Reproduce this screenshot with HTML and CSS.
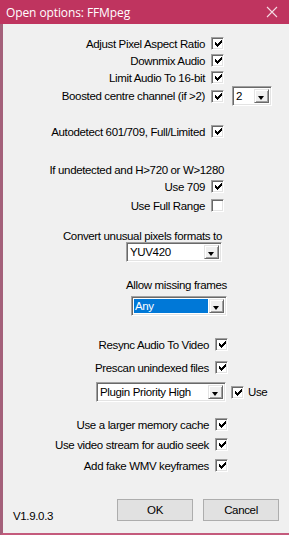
FILE: index.html
```html
<!DOCTYPE html>
<html>
<head>
<meta charset="utf-8">
<link rel="stylesheet" href="styles.css">
</head>
<body>
<div class="window">
  <div class="titlebar">
    <span class="title">Open options: FFMpeg</span>
    <svg class="close" width="12" height="12" viewBox="0 0 12 12"><path d="M1 1 L11 11 M11 1 L1 11" stroke="#f4dbe3" stroke-width="1.1" fill="none"/></svg>
  </div>
  <div class="content">
    <div class="row r1"><div class="main m1"><span>Adjust Pixel Aspect Ratio</span><span class="cb on"></span></div></div>
    <div class="row"><div class="main m1"><span>Downmix Audio</span><span class="cb on"></span></div></div>
    <div class="row"><div class="main m1"><span>Limit Audio To 16-bit</span><span class="cb on"></span></div></div>
    <div class="row tall"><div class="main m1"><span>Boosted centre channel (if &gt;2)</span><span class="cb on"></span></div>
      <div class="combo c-small"><span class="val">2</span><span class="btn"></span></div></div>
    <div class="row r-auto"><div class="main m1"><span>Autodetect 601/709, Full/Limited</span><span class="cb on"></span></div></div>
    <div class="row r-undet"><div class="main m-undet"><span>If undetected and H&gt;720 or W&gt;1280</span></div></div>
    <div class="row"><div class="main m1"><span>Use 709</span><span class="cb on"></span></div></div>
    <div class="row r-full"><div class="main m1"><span>Use Full Range</span><span class="cb"></span></div></div>
    <div class="label r-conv"><div class="main m-conv"><span>Convert unusual pixels formats to</span></div></div>
    <div class="row tall"><div class="main m-conv"><div class="combo c-yuv"><span class="val">YUV420</span><span class="btn"></span></div></div></div>
    <div class="label r-allow"><div class="main m-allow"><span>Allow missing frames</span></div></div>
    <div class="row tall r-any"><div class="main m-allow"><div class="combo c-any"><span class="val sel">Any</span><span class="btn"></span></div></div></div>
    <div class="row r-resync"><div class="main m3"><span>Resync Audio To Video</span><span class="cb on"></span></div></div>
    <div class="row r-pre"><div class="main m3"><span>Prescan unindexed files</span><span class="cb on"></span></div></div>
    <div class="row tall r-plug"><div class="main m-plug"><div class="combo c-plug"><span class="val">Plugin Priority High</span><span class="btn"></span></div></div>
      <span class="cb on use-cb"></span><span class="use">Use</span></div>
    <div class="row r-cache"><div class="main m3"><span>Use a larger memory cache</span><span class="cb on"></span></div></div>
    <div class="row r-vid"><div class="main m3"><span>Use video stream for audio seek</span><span class="cb on"></span></div></div>
    <div class="row r-wmv"><div class="main m3"><span>Add fake WMV keyframes</span><span class="cb on"></span></div></div>
    <div class="footer">
      <span class="ver">V1.9.0.3</span>
      <span class="button ok">OK</span>
      <span class="button cancel">Cancel</span>
    </div>
  </div>
</div>
</body>
</html>
```

FILE: styles.css
```css
html, body {
  margin: 0;
  padding: 0;
  background: #f0f0f0;
}
body {
  width: 289px;
  height: 535px;
  overflow: hidden;
  font-family: "Liberation Sans", Arial, sans-serif;
  font-size: 11.5px;
  letter-spacing: -0.35px;
  color: #000;
}
.window {
  width: 289px;
  height: 535px;
  box-sizing: border-box;
  border-left: 3px solid #a4607a;
  border-bottom: 2px solid #c45a7c;
  background: #f0f0f0;
  display: flex;
  flex-direction: column;
}
.titlebar {
  height: 24px;
  margin-left: -3px;
  background: #bf345f;
  display: flex;
  align-items: center;
  justify-content: space-between;
  padding: 0 11px 0 6px;
  flex: none;
}
.title {
  color: #fff;
  font-family: "Open Sans", "Liberation Sans", sans-serif;
  font-size: 12px;
  letter-spacing: -0.1px;
}
.close {
  display: block;
}
.content {
  display: flex;
  flex-direction: column;
}
.row {
  display: flex;
  align-items: center;
  height: 17px;
}
.row.tall {
  height: 20px;
}
.label {
  display: flex;
  align-items: center;
  height: 12px;
}
.main {
  display: flex;
  align-items: center;
  justify-content: flex-end;
  gap: 6px;
  flex: none;
  white-space: nowrap;
}
.m1 { width: 221px; }
.m3 { width: 225px; }
.m-undet { width: 221px; }
.m-conv { width: 219px; }
.m-allow { width: 224px; }
.m-plug { width: 223px; }

.r1 { margin-top: 11px; }
.r-auto { margin-top: 17px; }
.r-undet { margin-top: 21px; }
.r-full { margin-top: 2px; }
.r-conv { margin-top: 16px; }
.r-allow { margin-top: 17px; margin-bottom: 5px; }
.r-resync { margin-top: 20px; }
.r-pre { margin-top: 6px; }
.r-plug { margin-top: 6px; }
.r-cache { margin-top: 14px; }
.r-vid { margin-top: 3px; }
.r-wmv { margin-top: 4px; }

.cb {
  width: 13px;
  height: 13px;
  box-sizing: border-box;
  background: #fff;
  border-top: 1px solid #a0a0a0;
  border-left: 1px solid #a0a0a0;
  border-right: 1px solid #fff;
  border-bottom: 1px solid #fff;
  box-shadow: inset 1px 1px 0 #696969, inset -1px -1px 0 #e3e3e3;
  flex: none;
  position: relative;
}
.cb.on::after {
  content: "";
  position: absolute;
  left: 3px;
  top: 2px;
  width: 7px;
  height: 7px;
  background: no-repeat center / 7px 7px url("data:image/svg+xml;utf8,<svg xmlns='http://www.w3.org/2000/svg' width='7' height='7' viewBox='0 0 7 7' shape-rendering='crispEdges'><path d='M6 0h1v1h-1zM5 1h2v1h-2zM4 2h3v1h-3zM0 2h1v1h-1zM0 3h2v1h-2zM3 3h3v1h-3zM0 4h5v1h-5zM1 5h3v1h-3zM2 6h1v1h-1z' fill='black'/></svg>");
}

.combo {
  height: 20px;
  box-sizing: border-box;
  background: #fff;
  border-top: 1px solid #a0a0a0;
  border-left: 1px solid #a0a0a0;
  border-right: 1px solid #fff;
  border-bottom: 1px solid #fff;
  box-shadow: inset 1px 1px 0 #696969, inset -1px -1px 0 #e3e3e3;
  display: flex;
  align-items: stretch;
  padding: 2px;
  flex: none;
}
.c-small { width: 40px; margin-left: 8px; }
.c-yuv { width: 96px; }
.c-any { width: 96px; }
.c-plug { width: 130px; }
.val {
  flex: 1;
  display: flex;
  align-items: center;
  padding-left: 1px;
  white-space: nowrap;
  overflow: hidden;
}
.val.sel {
  background: #0078d7;
  color: #fff;
  margin-right: 1px;
}
.btn {
  width: 15px;
  flex: none;
  box-sizing: border-box;
  background: #f0f0f0;
  border-top: 1px solid #e3e3e3;
  border-left: 1px solid #e3e3e3;
  border-right: 1px solid #696969;
  border-bottom: 1px solid #696969;
  box-shadow: inset 1px 1px 0 #fff, inset -1px -1px 0 #a0a0a0;
  position: relative;
}
.btn::after {
  content: "";
  position: absolute;
  left: 3px;
  top: 6px;
  width: 0;
  height: 0;
  border-left: 3.5px solid transparent;
  border-right: 3.5px solid transparent;
  border-top: 4px solid #000;
}
.use-cb { margin-left: 5px; }
.use { margin-left: 4px; }

.footer {
  margin-top: 25px;
  height: 22px;
  display: flex;
  align-items: flex-end;
}
.ver {
  margin-left: 10px;
  width: 104px;
  line-height: 12px;
  margin-bottom: -1px;
}
.button {
  width: 76px;
  height: 22px;
  box-sizing: border-box;
  border: 1px solid #adadad;
  background: #e1e1e1;
  display: flex;
  align-items: center;
  justify-content: center;
}
.cancel { margin-left: 10px; }
```
